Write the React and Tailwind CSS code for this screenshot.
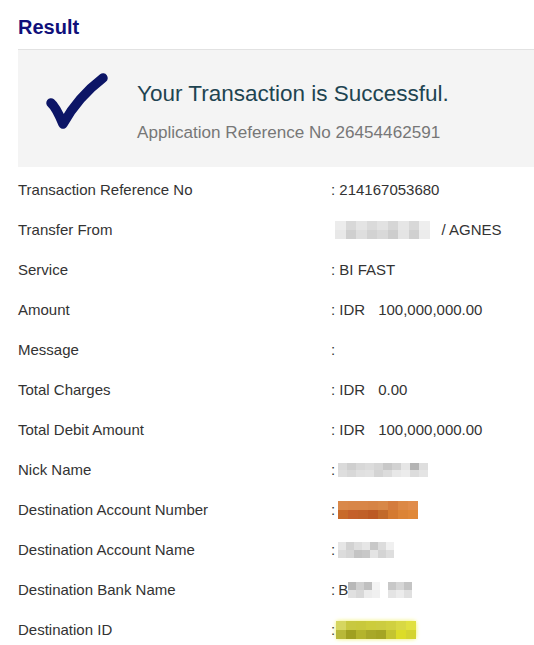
import React from "react";

function Pix({ rows, cw = 10, ch = 8, className = "" }) {
  return (
    <div className={"flex flex-col " + className}>
      {rows.map((r, i) => (
        <div key={i} className="flex">
          {r.map((c, j) => (
            <div key={j} style={{ width: cw, height: ch, background: c }} />
          ))}
        </div>
      ))}
    </div>
  );
}

const rowsData = [
  ["Transaction Reference No", ": 214167053680"],
  ["Transfer From", "from"],
  ["Service", ": BI FAST"],
  ["Amount", "amt:100,000,000.00"],
  ["Message", ":"],
  ["Total Charges", "amt:0.00"],
  ["Total Debit Amount", "amt:100,000,000.00"],
  ["Nick Name", "nick"],
  ["Destination Account Number", "acct"],
  ["Destination Account Name", "name"],
  ["Destination Bank Name", "bank"],
  ["Destination ID", "did"],
];

function Colon() {
  return <span className="mr-[3px]">:</span>;
}

function Value({ v }) {
  if (v.startsWith("amt:")) {
    return (
      <div className="flex">
        <span>: IDR</span>
        <span className="ml-[13px]">{v.slice(4)}</span>
      </div>
    );
  }
  if (v === "from") {
    return (
      <div className="flex items-center">
        <Pix
          className="ml-[4px]"
          cw={10.5}
          ch={9}
          rows={[
            ["#ececec", "#d8d8d8", "#e4e4e4", "#dadada", "#e2e2e2", "#d6d6d6", "#e6e6e6", "#d8d8d8", "#eeeeee"],
            ["#e8e8e8", "#cfcfcf", "#dedede", "#d2d2d2", "#d9d9d9", "#cdcdcd", "#e4e4e4", "#d0d0d0", "#ececec"],
          ]}
        />
        <span className="ml-[12px]">/ AGNES</span>
      </div>
    );
  }
  if (v === "nick") {
    return (
      <div className="flex items-center">
        <Colon />
        <Pix
          cw={9}
          ch={7}
          rows={[
            ["#dadada", "#cfcfcf", "#d8d8d8", "#dcdcdc", "#d6d6d6", "#c8c8c8", "#d2d2d2", "#e6e6e6", "#b4b4b4", "#dedede"],
            ["#dedede", "#d8d8d8", "#e0e0e0", "#e2e2e2", "#d4d4d4", "#dcdcdc", "#e8e8e8", "#ececec", "#dcdcdc", "#e4e4e4"],
          ]}
        />
      </div>
    );
  }
  if (v === "acct") {
    return (
      <div className="flex items-center">
        <Colon />
        <Pix
          cw={10}
          ch={9}
          rows={[
            ["#d9884a", "#d88648", "#d88648", "#d68446", "#d88848", "#d47c3e", "#dc8846", "#e08c4c"],
            ["#c86a2a", "#c4602a", "#c06028", "#bc5a24", "#c26a2a", "#d47a30", "#dc8436", "#e08838"],
          ]}
        />
      </div>
    );
  }
  if (v === "name") {
    return (
      <div className="flex items-center">
        <Colon />
        <Pix
          cw={8}
          ch={8}
          rows={[
            ["#e6e6e6", "#d2d2d2", "#dedede", "#e6e6e6", "#c8c8c8", "#dcdcdc", "#f0f0f0"],
            ["#dcdcdc", "#d6d6d6", "#c4c4c4", "#c8c8c8", "#e4e4e4", "#d4d4d4", "#dedede"],
          ]}
        />
      </div>
    );
  }
  if (v === "bank") {
    return (
      <div className="flex items-center">
        <Colon />
        <span>B</span>
        <Pix
          cw={8}
          ch={8}
          rows={[
            ["#b8b8b8", "#d0d0d0", "#c0c0c0", "#f4f4f4", "#ffffff", "#c8c8c8", "#d6d6d6", "#c4c4c4"],
            ["#e0e0e0", "#d8d8d8", "#ececec", "#f0f0f0", "#ffffff", "#e4e4e4", "#ececec", "#e0e0e0"],
          ]}
        />
      </div>
    );
  }
  if (v === "did") {
    return (
      <div className="flex items-center">
        <span className="mr-[1px]">:</span>
        <div className="rounded-[3px] shadow-[0_0_4px_#f0f060]">
          <Pix
            cw={10}
            ch={9}
            rows={[
              ["#d6d660", "#c8c840", "#c8c83c", "#cccc3c", "#cccc40", "#d0d040", "#d8d844", "#e0e040"],
              ["#b8b838", "#a0a020", "#b4b42c", "#a8a828", "#a4a424", "#c4c430", "#dcdc28", "#d4d430"],
            ]}
          />
        </div>
      </div>
    );
  }
  return <span>{v}</span>;
}

export default function App() {
  return (
    <div
      className="w-[534px] h-[645px] bg-white overflow-hidden text-[#333333]"
      style={{ fontFamily: '"Liberation Sans", Arial, sans-serif' }}
    >
      <div className="h-[49px] pl-[18px] flex items-center">
        <h1 className="text-[20px] font-bold text-[#10107a] leading-none mt-[4px]">Result</h1>
      </div>
      <div className="ml-[18px] h-[118px] bg-[#f4f4f4] border-t border-[#e2e2e2] flex items-start">
        <svg width="72" height="70" viewBox="0 0 72 70" className="ml-[22px] mt-[16px] shrink-0">
          <path
            d="M11 37 Q 16 41, 23 58 Q 38 31, 63 12"
            fill="none"
            stroke="#0c1566"
            strokeWidth="9.5"
            strokeLinecap="round"
            strokeLinejoin="round"
          />
        </svg>
        <div className="ml-[25px] flex flex-col">
          <div className="text-[22.5px] text-[#1e4451] leading-none mt-[33px] whitespace-nowrap">Your Transaction is Successful.</div>
          <div className="text-[17.1px] text-[#777777] leading-none mt-[18px] whitespace-nowrap">Application Reference No 26454462591</div>
        </div>
      </div>
      <div className="mt-[3px] flex flex-col text-[15px]">
        {rowsData.map(([label, v]) => (
          <div key={label} className="h-[40px] flex items-center">
            <div className="w-[331px] pl-[18px]">{label}</div>
            <Value v={v} />
          </div>
        ))}
      </div>
    </div>
  );
}
